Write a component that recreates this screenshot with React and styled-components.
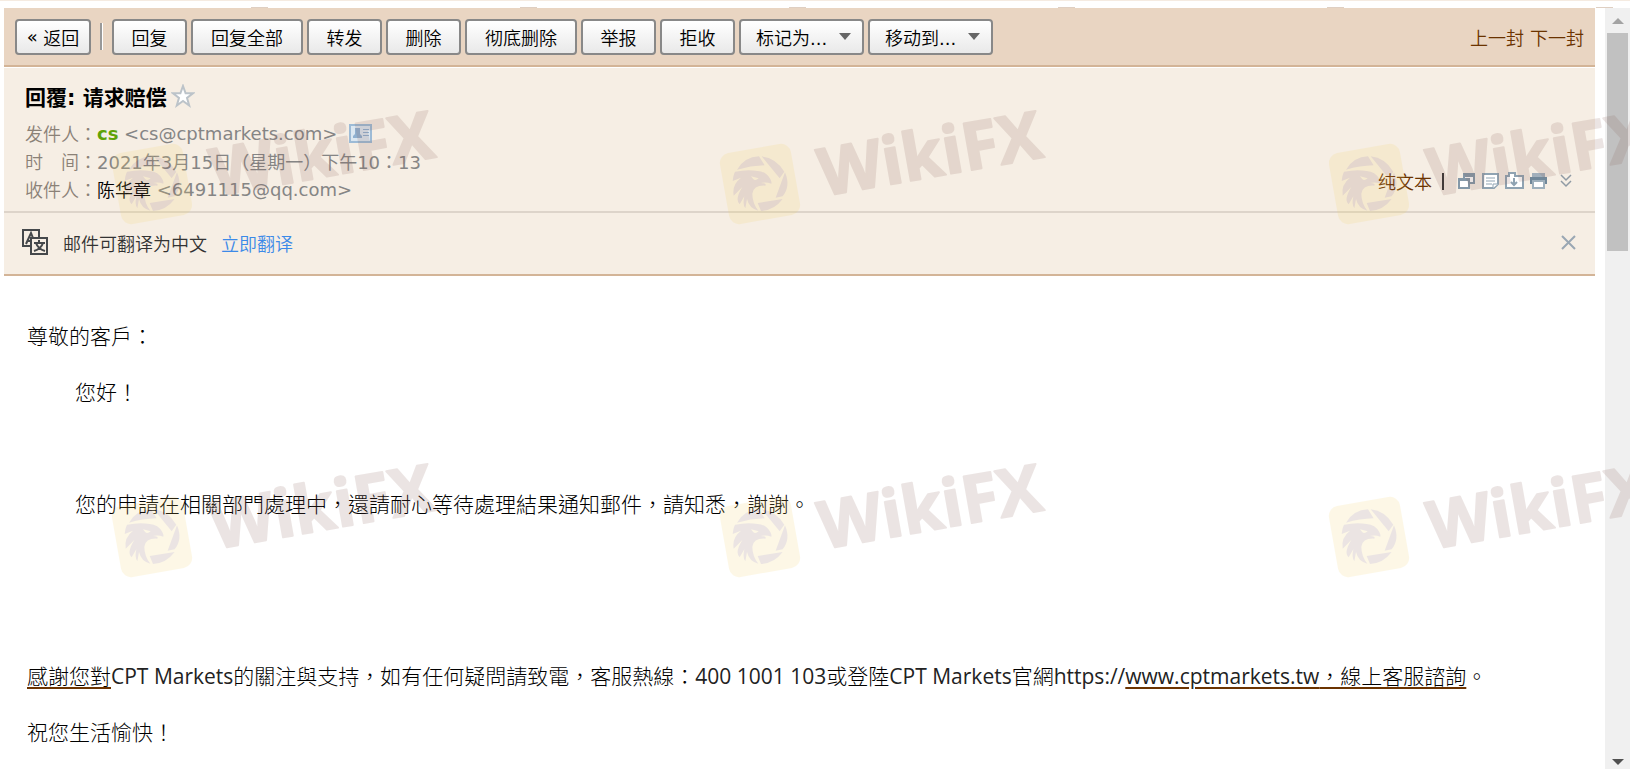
import React from 'react'
import styled, { createGlobalStyle } from 'styled-components'

const GlobalStyle = createGlobalStyle`
  * {
    box-sizing: border-box;
  }
  body {
    margin: 0;
    background: #fff;
    font-family: 'DejaVu Sans', 'Noto Sans CJK TC', sans-serif;
    font-size: 18px;
    overflow: hidden;
  }
`

const Page = styled.div`
  position: relative;
  display: flex;
  flex-direction: column;
  height: 100vh;
  overflow: hidden;
`
const TopEdge = styled.div`
  display: flex;
  align-items: flex-end;
  gap: 252px;
  height: 8px;
  flex: none;
  padding-left: 251px;
  border-top: 1px solid #f5ebe1;
  overflow: hidden;
`
const Notch = styled.i`
  flex: none;
  width: 17px;
  height: 1px;
  background: #dfcfc2;
`
const Frame = styled.div`
  display: flex;
  flex: 1;
  min-height: 0;
  padding-left: 4px;
`
const Mail = styled.main`
  flex: 1;
  min-width: 0;
  margin-right: 10px;
  overflow: hidden;
`
const Toolbar = styled.nav`
  display: flex;
  align-items: center;
  gap: 4px;
  height: 59px;
  padding: 0 11px;
  background: #e9d5c2;
  border-bottom: 2px solid #d3b497;
`
const ToolButton = styled.button`
  display: flex;
  align-items: center;
  justify-content: center;
  width: ${props => props.$width || 75}px;
  height: 36px;
  padding: 0;
  border: 2px solid #888;
  border-radius: 4px;
  background: linear-gradient(#fff, #e9e9e9);
  color: #000;
  font-family: 'DejaVu Sans', 'Noto Sans CJK SC', sans-serif;
  font-size: 18px;
  font-weight: 350;
  white-space: pre;
`
const MenuButton = styled(ToolButton)`
  justify-content: space-between;
  width: 125px;
  padding: 0 11px 0 15px;
`
const Symbol = styled.span`
  font-weight: 400;
`
const Separator = styled.i`
  width: 3px;
  height: 27px;
  margin: 0 5px;
  background: #999;
  border-right: 1px solid #fff;
`
const Pager = styled.div`
  display: flex;
  gap: 6px;
  margin-left: auto;
`
const BrownLink = styled.a`
  color: #6b3300;
  font-family: 'Noto Sans CJK SC', sans-serif;
  font-weight: 350;
  text-decoration: none;
`
const Header = styled.header`
  display: flex;
  justify-content: space-between;
  align-items: flex-end;
  height: 145px;
  margin-top: 1px;
  padding: 0 19px 8px 21px;
  background: #f6eee4;
  border-bottom: 2px solid #ddd4ca;
`
const Subject = styled.h1`
  display: flex;
  align-items: center;
  gap: 4px;
  height: 32px;
  margin: 0 0 7px;
  font-family: 'DejaVu Sans', 'Noto Sans CJK SC', sans-serif;
  font-size: 21px;
  font-weight: 700;
`
const Field = styled.div`
  display: flex;
  align-items: center;
  height: 28px;
  color: #858585;
  white-space: pre;
`
const Label = styled.span`
  width: 72px;
  color: #8b8177;
  font-weight: 350;
  font-family: 'Noto Sans CJK TC', sans-serif;
`
const Sender = styled.b`
  color: #5fa207;
`
const Recipient = styled.span`
  color: #000;
  font-weight: 350;
  font-family: 'Noto Sans CJK SC', sans-serif;
`
const CardIcon = styled.svg`
  margin-left: 12px;
`
const Tools = styled.div`
  display: flex;
  align-items: center;
  gap: 5px;
  height: 28px;
  margin-bottom: 8px;
`
const Bar = styled.i`
  width: 2px;
  height: 17px;
  margin: 0 8px 0 5px;
  background: #333;
`
const IconButton = styled.button`
  display: flex;
  padding: 0;
  border: 0;
  background: none;
`
const Translate = styled.section`
  display: flex;
  align-items: center;
  height: 63px;
  padding: 0 18px 2px;
  background: #f6eee4;
  border-bottom: 2px solid #d3b497;
  color: #333;
  font-family: 'Noto Sans CJK SC', sans-serif;
  font-weight: 350;
  line-height: 24px;
`
const TranslateText = styled.span`
  margin: 0 14px 0 14px;
`
const TranslateLink = styled.a`
  margin-right: auto;
  color: #3c8ae8;
  text-decoration: none;
`
const Letter = styled.article`
  padding: 46px 23px 0;
  font-family: 'Open Sans', 'Noto Sans CJK TC', sans-serif;
  font-size: 21px;
  font-weight: 300;
  line-height: 28px;
  white-space: nowrap;
`
const Line = styled.p`
  height: 28px;
  margin: 0 0 28px;
  padding-left: ${props => props.$indent ? 48 : 0}px;
`
const Blank = styled.div`
  height: ${props => props.$height}px;
`
const Latin = styled.span`
  color: #222;
  font-weight: 400;
`
const LetterLink = styled.a`
  color: #000;
  text-decoration: underline #6b3300 2px;
  text-underline-offset: 3px;
`
const ScrollTrack = styled.div`
  display: flex;
  flex-direction: column;
  align-items: center;
  width: 25px;
  padding: 10px 0 4px;
  background: #f0f0f0;
`
const Thumb = styled.div`
  width: 21px;
  height: 218px;
  margin: 9px 0 auto;
  background: #c1c1c1;
`
const WatermarkLayer = styled.svg`
  position: absolute;
  inset: 0;
  width: 100%;
  height: 100%;
  pointer-events: none;
`

const Caret = () => (
  <svg width="12" height="7" viewBox="0 0 12 7"><path d="M0 0h12L6 7z" fill="#666" /></svg>
)

const Watermark = ({ x, y }) => (
  <g transform={`translate(${x} ${y})`} opacity=".16" fill="#8a6058">
    <rect x="-36" y="-36" width="72" height="72" rx="10" fill="#f5d468" transform="rotate(-10)" />
    <g transform="scale(.333) translate(-127 -133)">
      <path d="M58 90Q80 52 124 50L141 77Q100 78 58 90Z" />
      <path d="M132 50Q176 55 200 96L186 116Z" />
      <path d="M202 98Q220 140 195 170L174 174Z" />
      <path d="M120 190L195 178Q170 212 130 214Z" />
      <path d="M52 96Q90 88 120 94Q146 96 158 118Q163 128 161 132Q145 126 130 130Q148 131 143 138Q108 136 104 162Q104 190 122 213Q94 206 88 178L83 206Q74 195 80 170L66 194Q50 180 74 142L48 168Q42 135 70 114L45 124Q47 105 52 96Z" />
      <path d="M100 110L123 116Q112 125 106 117Z" fill="#f5d468" />
    </g>
    <text
      x="60"
      y="23"
      transform="rotate(-10)"
      fontFamily="'Open Sans', sans-serif"
      fontSize="66"
      fontWeight="700"
      stroke="#8a6058"
      strokeWidth="2"
      strokeLinejoin="round"
    >WikiFX</text>
  </g>
)

const App = () => {
  return (
    <Page>
      <GlobalStyle />
      <TopEdge>
        {[0, 1, 2, 3, 4, 5].map(n => <Notch key={n} />)}
      </TopEdge>
      <Frame>
        <Mail>
          <Toolbar>
            <ToolButton $width={76}><Symbol>« </Symbol>返回</ToolButton>
            <Separator />
            <ToolButton>回复</ToolButton>
            <ToolButton $width={112}>回复全部</ToolButton>
            <ToolButton>转发</ToolButton>
            <ToolButton>删除</ToolButton>
            <ToolButton $width={112}>彻底删除</ToolButton>
            <ToolButton>举报</ToolButton>
            <ToolButton>拒收</ToolButton>
            <MenuButton><span>标记为<Symbol>...</Symbol></span><Caret /></MenuButton>
            <MenuButton><span>移动到<Symbol>...</Symbol></span><Caret /></MenuButton>
            <Pager>
              <BrownLink href="#prev">上一封</BrownLink>
              <BrownLink href="#next">下一封</BrownLink>
            </Pager>
          </Toolbar>
          <Header>
            <div>
              <Subject>
                回覆: 请求赔偿
                <svg width="24" height="24" viewBox="0 0 24 24" fill="#fff" stroke="#bcc3c9" strokeWidth="2">
                  <path d="M12 2l2.600 7.300h7.400l-6 4.600 2.200 7.600-6.200-4.500-6.200 4.500 2.200-7.600-6-4.600h7.400z" />
                </svg>
              </Subject>
              <Field>
                <Label>发件人：</Label>
                <Sender>cs</Sender> &lt;cs@cptmarkets.com&gt;
                <CardIcon width="24" height="19" viewBox="0 0 24 19">
                  <path d="M1 1h21v17H1z" fill="#dbe7f1" stroke="#9dbbd6" strokeWidth="2" />
                  <path d="M6 4h5v6l2 2v2H4v-2l2-2zM14 5h6v1h-6zM14 8h6v1h-6zM14 11h6v1h-6z" fill="#8fb0d0" />
                </CardIcon>
              </Field>
              <Field>
                <Label>时　间：</Label>
                2021年3月15日（星期一）下午10：13
              </Field>
              <Field>
                <Label>收件人：</Label>
                <Recipient>陈华章</Recipient> &lt;6491115@qq.com&gt;
              </Field>
            </div>
            <Tools>
              <BrownLink href="#plain">纯文本</BrownLink>
              <Bar />
              <IconButton aria-label="新窗口打开">
                <svg width="19" height="18" viewBox="0 0 19 18" fill="#fff" stroke="#8498a8" strokeWidth="2">
                  <path d="M7 2h10v9H7zM7 4h10" />
                  <path d="M2 7h10v9H2zM2 8h10" />
                </svg>
              </IconButton>
              <IconButton aria-label="添加备注">
                <svg width="19" height="18" viewBox="0 0 19 18" fill="#fff" stroke="#8fa3b2" strokeWidth="2">
                  <path d="M2 2h15v10l-4 4H2z" />
                  <path d="M5 6h9M5 9h9M5 12h6M12 16v-4h5" strokeWidth="1" />
                </svg>
              </IconButton>
              <IconButton aria-label="导出">
                <svg width="19" height="18" viewBox="0 0 19 18" fill="#fff" stroke="#8fa3b2" strokeWidth="2">
                  <path d="M1 16V4h3V1h6v3h8v12z" />
                  <path d="M9 6v7M6 10l3 3 3-3" fill="none" />
                </svg>
              </IconButton>
              <IconButton aria-label="打印">
                <svg width="19" height="18" viewBox="0 0 19 18">
                  <path d="M3 1h13v5H3z" fill="#a2b0bc" />
                  <path d="M1 5h17v7H1z" fill="#71889a" />
                  <path d="M4 9h11v7H4z" fill="#fff" stroke="#9fb0bc" strokeWidth="2" />
                </svg>
              </IconButton>
              <IconButton aria-label="展开">
                <svg width="23" height="14" viewBox="0 0 23 14" fill="none" stroke="#8f9aa4" strokeWidth="1.500">
                  <path d="M8 1l5 5 5-5M8 7l5 5 5-5" />
                </svg>
              </IconButton>
            </Tools>
          </Header>
          <Translate>
            <svg width="27" height="27" viewBox="0 0 27 27" fill="none" stroke="#45484b" strokeWidth="2">
              <path d="M9 17H1V1h16v7M4 15L9 4l2 5M6 12h3" />
              <path d="M9 9h16v16H9zM12 14h11M17 11v3M14 14q2 6 9 8M21 14q-2 6-9 8" />
            </svg>
            <TranslateText>邮件可翻译为中文</TranslateText>
            <TranslateLink href="#translate">立即翻译</TranslateLink>
            <IconButton aria-label="关闭">
              <svg width="16" height="16" viewBox="0 0 16 16" stroke="#9aa7b3" strokeWidth="2">
                <path d="M1 1l13 13M14 1L1 14" />
              </svg>
            </IconButton>
          </Translate>
          <Letter>
            <Line>尊敬的客戶：</Line>
            <Line $indent>您好！</Line>
            <Blank $height={56} />
            <Line $indent>您的申請在相關部門處理中，還請耐心等待處理結果通知郵件，請知悉，謝謝。</Line>
            <Blank $height={116} />
            <Line>
              <LetterLink href="#thanks">感謝您對</LetterLink>
              <Latin>CPT Markets</Latin>的關注與支持，如有任何疑問請致電，客服熱線：<Latin>400 1001 103</Latin>或登陸<Latin>CPT Markets</Latin>官網<Latin>https://</Latin>
              <LetterLink href="#site"><Latin>www.cptmarkets.tw</Latin>，線上客服諮詢</LetterLink>
              。
            </Line>
            <Line>祝您生活愉快！</Line>
          </Letter>
        </Mail>
        <ScrollTrack>
          <svg width="12" height="6" viewBox="0 0 12 6"><path d="M0 6h12L6 0z" fill="#a3a3a3" /></svg>
          <Thumb />
          <svg width="12" height="6" viewBox="0 0 12 6"><path d="M0 0h12L6 6z" fill="#505050" /></svg>
        </ScrollTrack>
      </Frame>
      <WatermarkLayer aria-hidden="true">
        {[184, 537].map(y => [152, 760, 1369].map(x => <Watermark key={`${x}-${y}`} x={x} y={y} />))}
      </WatermarkLayer>
    </Page>
  )
}

export default App
